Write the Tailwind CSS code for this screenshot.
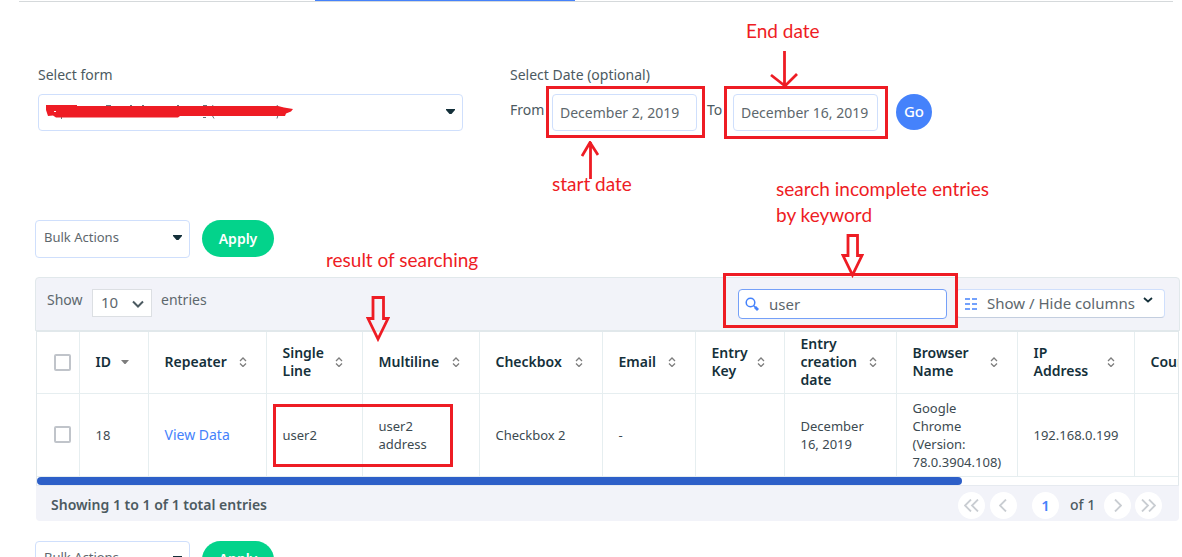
<!DOCTYPE html>
<html lang="en">
<head>
<meta charset="utf-8">
<title>Incomplete entries</title>
<script src="https://cdn.jsdelivr.net/npm/@tailwindcss/browser@4"></script>
</head>
<body class="bg-white font-['Noto_Sans',sans-serif] text-sm text-[#4c5a61] overflow-x-hidden">
<svg class="hidden" aria-hidden="true">
  <symbol id="caret" viewBox="0 0 9 5"><path d="M0 0h9v1L5.500 5h-2L0 1z" fill="#14303a"/></symbol>
  <symbol id="sort" viewBox="0 0 8 10"><path d="M1 4 4 1l3 3M1 6.500l3 3 3-3" fill="none" stroke="#7d7d7d" stroke-width="1.300"/></symbol>
</svg>

<nav class="ml-[19px] mr-[9px] h-[2px] border-b border-[#d5d9db]" aria-label="Tabs"><div class="ml-[296px] h-px w-[260px] bg-[#4582fb]"></div></nav>

<main class="pt-[63px]">
  <form class="flex pl-[38px]">
    <div class="w-[472px] shrink-0">
      <label for="form" class="block leading-5">Select form</label>
      <div class="relative mt-[9px] w-[425px]">
        <select id="form" class="block h-[37px] w-full appearance-none rounded border border-[#cfdffc] bg-white px-2"><option></option></select>
        <svg class="pointer-events-none absolute right-2 top-[15px] h-[5px] w-[9px]"><use href="#caret"/></svg>
        <svg class="pointer-events-none absolute left-[7px] top-[9px]" width="250" height="17" viewBox="0 0 250 17">
          <path d="M61 2.500h5M85 2.500h2M97 2.500h2M132 2.500h2M158 2.500h4M168 2l-1 2M232 2l1 2M16.500 13v3M158 14.500h3M167 12l2 3.500M233 12l-1 3.500" stroke="#67737a" fill="none"/>
          <path d="M1 2h31v1h201l6 1.500 9 1.500-2 2.500-5 2-1 2.500H135l-2 1.500H11l-3-2-5 .500-2-6z" fill="#ee1c24"/>
          <path d="M9 8.500h2" stroke="#fff"/>
        </svg>
      </div>
    </div>
    <fieldset>
      <legend class="block leading-5">Select Date (optional)</legend>
      <div class="mt-[9px] flex">
        <label for="from" class="w-[42px] pt-1.5 leading-5">From</label>
        <div class="relative w-[145px]">
          <input id="from" type="text" value="December 2, 2019" class="block h-[37px] w-full rounded border border-[#cfdffc] bg-white px-[7px] text-[#5d676d]">
          <div class="pointer-events-none absolute -left-1.5 -top-2 h-[52px] w-[159px] border-3 border-[#ee1c24]"></div>
          <svg class="absolute left-[29px] top-[47px]" width="18" height="38" viewBox="0 0 18 38"><path d="M9.500 38V1M1 15 9 1.500 17 14" fill="none" stroke="#ee1c24" stroke-width="2.800"/></svg>
          <p class="absolute left-0 top-[78px] whitespace-nowrap font-['Lato',sans-serif] text-[19px] leading-6 text-[#ee1c24]">start date</p>
        </div>
        <label for="to" class="ml-[10px] w-[26px] pt-1.5 leading-5">To</label>
        <div class="relative w-[145px]">
          <input id="to" type="text" value="December 16, 2019" class="block h-[37px] w-full rounded border border-[#cfdffc] bg-white px-[7px] text-[#5d676d]">
          <div class="pointer-events-none absolute -left-[9px] -top-2 h-[53px] w-[164px] border-3 border-[#ee1c24]"></div>
          <svg class="absolute left-[37px] -top-[43px]" width="28" height="37" viewBox="0 0 28 37"><path d="M14.500 0v36M1 24l14 11L27 23" fill="none" stroke="#ee1c24" stroke-width="2.800"/></svg>
          <p class="absolute left-[13px] -top-[75px] whitespace-nowrap font-['Lato',sans-serif] text-[19px] leading-6 text-[#ee1c24]">End date</p>
        </div>
        <button type="button" class="ml-[18px] size-9 rounded-full bg-[#4582fb] font-medium text-[15px] text-white">Go</button>
      </div>
    </fieldset>
  </form>

  <div class="mt-[89px] flex gap-3 pl-[35px]">
    <div class="relative w-[155px]">
      <select aria-label="Bulk action" class="block h-[38px] w-full appearance-none rounded border border-[#cfdffc] bg-white px-2 pb-1 text-[13px] text-[#5d676d]"><option>Bulk Actions</option></select>
      <svg class="pointer-events-none absolute right-2 top-[15px] h-[5px] w-[9px]"><use href="#caret"/></svg>
    </div>
    <button type="button" class="h-[37px] w-[72px] rounded-full bg-[#03d38b] text-sm font-semibold text-white">Apply</button>
  </div>

  <section class="ml-[35px] mr-0.5 mt-[19px]">
    <div class="relative z-10 flex h-[54px] items-start rounded-t-sm border border-[#e1e8eb] bg-[#f2f3f9] pl-[11px] pr-3.5 pt-[11px] text-[#5d676d]">
      <label for="count" class="w-[45px] leading-[22px]">Show</label>
      <div class="relative w-[60px]">
        <select id="count" class="block h-7 w-full appearance-none border border-[#dcdfe3] bg-white px-2 text-[15px]"><option>10</option></select>
        <svg class="pointer-events-none absolute right-2 top-[11px]" width="12" height="8" viewBox="0 0 12 8"><path d="m1 1.500 5 5 5-5" fill="none" stroke="#4c5a61" stroke-width="2"/></svg>
      </div>
      <span class="ml-[9px] leading-[22px]">entries</span>

      <div class="relative ml-auto w-[209px]">
        <input type="search" aria-label="Search entries" value="user" class="block h-[30px] w-full appearance-none rounded border border-[#75a0f8] bg-white pl-[30px] text-[15px] text-[#5d676d]">
        <svg class="absolute left-[7px] top-2" width="15" height="15" viewBox="0 0 15 15" fill="none" stroke="#4582fb"><circle cx="5.500" cy="5.500" r="4.300" stroke-width="1.500"/><path d="m8.500 8.500 2 2" stroke-width="1.500"/><path d="m10 10 3 3" stroke-width="2.800"/></svg>
        <div class="pointer-events-none absolute -left-[15px] -top-4 z-10 h-[55px] w-[235px] border-3 border-[#ee1c24]"></div>
        <svg class="absolute left-[103px] -top-[55px]" width="23" height="44" viewBox="0 0 23 44"><path d="M7 1.500h9.500v20H21L11.500 41 2 21.500h5z" fill="#fff" stroke="#ee1c24" stroke-width="2.800"/></svg>
        <p class="absolute left-[38px] -top-[113px] whitespace-nowrap font-['Lato',sans-serif] text-[19px] leading-[26px] text-[#ee1c24]">search incomplete entries<br>by keyword</p>
      </div>
      <button type="button" class="ml-[9px] flex h-[29px] w-[209px] items-center rounded-sm border border-[#cfdffc] border-b-[#c3cedf] bg-white pl-2 text-[15px]">
        <svg width="12" height="12" viewBox="0 0 12 12"><path d="M0 1h5M7 1h5M0 6h5M7 6h5M0 11h5M7 11h5" stroke="#4582fb" stroke-width="1.300"/></svg>
        <span class="ml-2.5 whitespace-nowrap">Show / Hide columns</span>
        <svg class="mb-2 ml-2" width="10" height="6" viewBox="0 0 10 6"><path d="m1 1 4 3.500L9 1" fill="none" stroke="#14303a" stroke-width="1.800"/></svg>
      </button>

      <p class="absolute left-[290px] -top-[30px] whitespace-nowrap font-['Lato',sans-serif] text-[19px] leading-6 text-[#ee1c24]">result of searching</p>
      <svg class="absolute left-[330px] top-[18px]" width="24" height="46" viewBox="0 0 24 46"><path d="M7 1.500h10.500v21H22L12 43 2 22.500h5z" fill="none" stroke="#ee1c24" stroke-width="2.800"/></svg>
    </div>

    <div class="ml-px mr-px overflow-hidden border-x border-t border-[#e1e8eb]">
      <table class="w-[1227px] table-fixed border-collapse text-left">
        <colgroup><col class="w-[42px]"><col class="w-[69px]"><col class="w-[118px]"><col class="w-[96px]"><col class="w-[117px]"><col class="w-[123px]"><col class="w-[93px]"><col class="w-[89px]"><col class="w-[112px]"><col class="w-[121px]"><col class="w-[117px]"><col class="w-[130px]"></colgroup>
        <thead class="text-sm leading-[18px] text-[#14303a]">
          <tr class="h-[61px] border-b border-[#e6eef0]">
            <th class="border-r border-[#e6eef0] pl-[17px]"><input type="checkbox" aria-label="Select all" class="block size-[17px] appearance-none rounded-xs border-2 border-[#c0c4ca] bg-white"></th>
            <th class="border-r border-[#e6eef0] pl-4 pr-[19px] font-semibold"><span class="flex items-center justify-between">ID<svg width="8" height="4" viewBox="0 0 8 4"><path d="M0 0h8L4.500 4h-1z" fill="#7d7d7d"/></svg></span></th>
            <th class="border-r border-[#e6eef0] pl-4 pr-[19px] font-semibold"><span class="flex items-center justify-between">Repeater<svg width="8" height="10"><use href="#sort"/></svg></span></th>
            <th class="border-r border-[#e6eef0] pl-4 pr-[19px] font-semibold"><span class="flex items-center justify-between"><span>Single<br>Line</span><svg width="8" height="10"><use href="#sort"/></svg></span></th>
            <th class="border-r border-[#e6eef0] pl-4 pr-[19px] font-semibold"><span class="flex items-center justify-between">Multiline<svg width="8" height="10"><use href="#sort"/></svg></span></th>
            <th class="border-r border-[#e6eef0] pl-4 pr-[19px] font-semibold"><span class="flex items-center justify-between">Checkbox<svg width="8" height="10"><use href="#sort"/></svg></span></th>
            <th class="border-r border-[#e6eef0] pl-4 pr-[19px] font-semibold"><span class="flex items-center justify-between">Email<svg width="8" height="10"><use href="#sort"/></svg></span></th>
            <th class="border-r border-[#e6eef0] pl-4 pr-[19px] font-semibold"><span class="flex items-center justify-between"><span>Entry<br>Key</span><svg width="8" height="10"><use href="#sort"/></svg></span></th>
            <th class="border-r border-[#e6eef0] pl-4 pr-[19px] font-semibold"><span class="flex items-center justify-between"><span>Entry<br>creation<br>date</span><svg width="8" height="10"><use href="#sort"/></svg></span></th>
            <th class="border-r border-[#e6eef0] pl-4 pr-[19px] font-semibold"><span class="flex items-center justify-between"><span>Browser<br>Name</span><svg width="8" height="10"><use href="#sort"/></svg></span></th>
            <th class="border-r border-[#e6eef0] pl-4 pr-[19px] font-semibold"><span class="flex items-center justify-between"><span>IP<br>Address</span><svg width="8" height="10"><use href="#sort"/></svg></span></th>
            <th class="pl-4 font-semibold">Country</th>
          </tr>
        </thead>
        <tbody class="text-[13px] leading-[18px] text-[#3c4a51]">
          <tr class="h-[83px] border-b border-[#e6eef0]">
            <td class="border-r border-[#e6eef0] pl-[17px]"><input type="checkbox" aria-label="Select entry 18" class="block size-[17px] appearance-none rounded-xs border-2 border-[#c0c4ca] bg-white"></td>
            <td class="border-r border-[#e6eef0] pl-4">18</td>
            <td class="border-r border-[#e6eef0] pl-4"><a href="#" class="text-sm text-[#4582fb]">View Data</a></td>
            <td class="relative border-r border-[#e6eef0] pl-4">user2<div class="pointer-events-none absolute left-1.5 top-[10px] z-10 h-[63px] w-[180px] border-3 border-[#ee1c24]"></div></td>
            <td class="border-r border-[#e6eef0] pl-4">user2<br>address</td>
            <td class="border-r border-[#e6eef0] pl-4">Checkbox 2</td>
            <td class="border-r border-[#e6eef0] pl-4">-</td>
            <td class="border-r border-[#e6eef0] pl-4"></td>
            <td class="border-r border-[#e6eef0] pl-4">December<br>16, 2019</td>
            <td class="border-r border-[#e6eef0] pl-4">Google<br>Chrome<br>(Version:<br>78.0.3904.108)</td>
            <td class="border-r border-[#e6eef0] pl-4">192.168.0.199</td>
            <td></td>
          </tr>
        </tbody>
      </table>
      <div class="h-2 bg-white"><div class="h-2 w-[925px] rounded-full bg-[#2d5fc8]"></div></div>
    </div>

    <footer class="ml-px mr-px flex h-[36px] items-center rounded-b-sm border-t border-[#e6eaf0] bg-[#f2f3f9] pl-[15px] pr-[17px] pt-1">
      <p class="font-semibold">Showing 1 to 1 of 1 total entries</p>
      <div class="ml-auto flex items-center">
        <button type="button" aria-label="First page" class="flex size-[27px] items-center justify-center rounded-full bg-white"><svg width="15" height="13" viewBox="0 0 15 13"><path d="M7 .500 1 6.500l6 6M14 .500l-6 6 6 6" fill="none" stroke="#c9cdd2" stroke-width="1.800"/></svg></button>
        <button type="button" aria-label="Previous page" class="ml-[5px] flex size-[27px] items-center justify-center rounded-full bg-white"><svg width="9" height="13" viewBox="0 0 9 13"><path d="m7 .500-6 6 6 6" fill="none" stroke="#c9cdd2" stroke-width="1.800"/></svg></button>
        <input type="text" aria-label="Page" value="1" class="ml-[15px] size-[27px] rounded-full bg-white text-center text-[15px] font-semibold text-[#4582fb]">
        <span class="ml-[11px] w-[34px] font-medium">of 1</span>
        <button type="button" aria-label="Next page" class="flex size-[27px] items-center justify-center rounded-full bg-white"><svg width="9" height="13" viewBox="0 0 9 13"><path d="m2 .500 6 6-6 6" fill="none" stroke="#c9cdd2" stroke-width="1.800"/></svg></button>
        <button type="button" aria-label="Last page" class="ml-1 flex size-[27px] items-center justify-center rounded-full bg-white"><svg width="15" height="13" viewBox="0 0 15 13"><path d="m1 .500 6 6-6 6M8 .500l6 6-6 6" fill="none" stroke="#c9cdd2" stroke-width="1.800"/></svg></button>
      </div>
    </footer>
  </section>

  <div class="mt-5 flex gap-3 pl-[35px]">
    <div class="relative w-[155px]">
      <select aria-label="Bulk action, bottom" class="block h-[38px] w-full appearance-none rounded border border-[#cfdffc] bg-white px-2 pb-1 text-[13px] text-[#5d676d]"><option>Bulk Actions</option></select>
      <svg class="pointer-events-none absolute right-2 top-[15px] h-[5px] w-[9px]"><use href="#caret"/></svg>
    </div>
    <button type="button" class="h-[37px] w-[72px] rounded-full bg-[#03d38b] text-sm font-semibold text-white">Apply</button>
  </div>
</main>
</body>
</html>
